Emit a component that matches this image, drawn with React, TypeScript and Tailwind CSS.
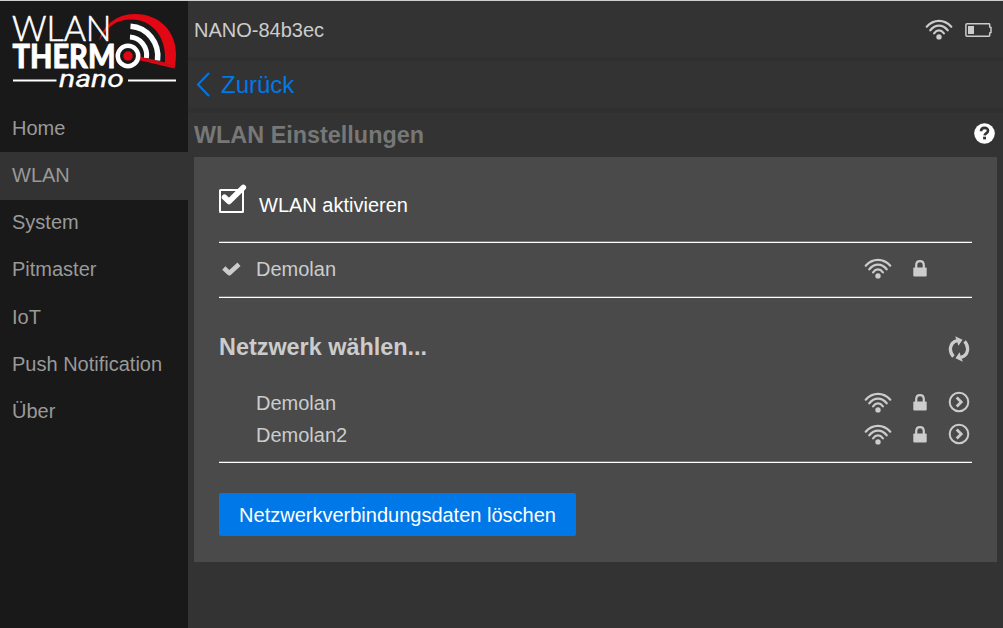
import React from "react";

const navItems = ["Home", "WLAN", "System", "Pitmaster", "IoT", "Push Notification", "Über"];

function Logo() {
  return (
    <svg width="188" height="103.2" viewBox="0 1 188 103.2" className="block" fill="none">
      <path d="M99 41C103 26 116 14 135 14C160 14 176 32 176 54C176 59 175.500 64 174.500 68.500L139 60L140 56.500L165 62.500C167 38 153 19.500 131 19.500C116 19.500 107 27 99 41Z" fill="#e30613" />
      <path d="M141 58.500L174 66" stroke="#b0101b" strokeWidth="0.8" />
      <text x="12" y="41" fill="#fff" stroke="#fff" strokeWidth="0.6" fontSize="34.500" fontWeight="300" textLength="99.500" lengthAdjust="spacingAndGlyphs" fontFamily="Lato, sans-serif">
        WLAN
      </text>
      <path d="M130 37A17.500 18.500 0 0 1 146.500 58" stroke="#fff" strokeWidth="5" />
      <path d="M130.500 26.300A29 30 0 0 1 157.500 60.500" stroke="#fff" strokeWidth="5.500" />
      <text x="12.500" y="67.700" fill="#fff" stroke="#fff" strokeWidth="0.8" fontSize="32.500" fontWeight="900" textLength="103" lengthAdjust="spacingAndGlyphs" fontFamily="Lato, sans-serif">
        THERM
      </text>
      <circle cx="128" cy="56" r="10.200" fill="#191919" stroke="#fff" strokeWidth="4.500" />
      <circle cx="128" cy="56" r="4.700" fill="#e30613" />
      <path d="M13 80.500H56.500M128 80.500H176" stroke="#fff" strokeWidth="2.200" />
      <text x="59" y="86.800" fill="#fff" stroke="#fff" strokeWidth="0.3" fontSize="24" fontStyle="italic" fontWeight="400" textLength="65" lengthAdjust="spacingAndGlyphs" fontFamily="Roboto, sans-serif">
        nano
      </text>
    </svg>
  );
}

function Wifi() {
  return (
    <svg width="28" height="21" viewBox="0 0 28 21" fill="none" stroke="currentColor" strokeWidth="2.2" strokeLinecap="round">
      <path d="M1.700 7.700C8.600-.2 19.400-.2 26.300 7.700" />
      <path d="M5.300 11.300C10.300 5.100 17.700 5.100 22.700 11.300" />
      <path d="M9.100 14.300C12 10.500 16 10.500 18.900 14.300" />
      <circle cx="14" cy="17.900" r="2.700" fill="currentColor" stroke="none" />
    </svg>
  );
}

function Lock() {
  return (
    <svg width="14" height="17" viewBox="0 0 14 17" fill="none">
      <path d="M3.200 8V5.200C3.200-.2 10.800-.2 10.800 5.200V8" stroke="currentColor" strokeWidth="2.200" />
      <rect x="0.300" y="7.600" width="13.400" height="9" rx="1" fill="currentColor" />
    </svg>
  );
}

function Go() {
  return (
    <svg width="22" height="22" viewBox="0 0 22 22" fill="none" stroke="currentColor">
      <circle cx="11" cy="11" r="9.300" strokeWidth="2" />
      <path d="M8.700 6.500L13.200 11L8.700 15.500" strokeWidth="2.800" />
    </svg>
  );
}

function Refresh() {
  return (
    <svg width="22" height="26" viewBox="0 0 22 26" fill="none">
      <path d="M5.400 20.600C.8 15.500 1.200 6.800 9 4.600M16.600 5.400C21.200 10.500 20.800 19.200 13 21.400" stroke="currentColor" strokeWidth="3.300" />
      <path d="M7.200.2L14.500 3.800L10.500 9.800Z M14.800 25.800L7.500 22.200L11.500 16.200Z" fill="currentColor" />
    </svg>
  );
}

function Rule() {
  return <div className="h-[2px] border-t border-[#777] bg-white" />;
}

function Network({ name, connected = false }: { name: string; connected?: boolean }) {
  return (
    <div className="flex h-8 items-center">
      <div className="flex w-[37px] pl-[3px]">
        {connected && (
          <svg width="19" height="15" viewBox="0 0 19 15" fill="none" stroke="currentColor" strokeWidth="4.6">
            <path d="M1.800 6L7.200 11.200L17 2.300" strokeLinejoin="round" />
          </svg>
        )}
      </div>
      <span className="flex-1">{name}</span>
      <div className="flex w-[108px] items-center pb-[2px]">
        <Wifi />
        <div className="ml-[21px]"><Lock /></div>
        {!connected && <div className="ml-[21px]"><Go /></div>}
      </div>
    </div>
  );
}

export default function App() {
  return (
    <div className="flex h-[628px] w-[1003px] overflow-hidden border-t border-[#ccd0ce] bg-[#333] font-['Liberation_Sans',Arial,sans-serif] text-[20px] leading-6 text-[#ccc]">
      <aside className="w-[188px] shrink-0 bg-[#191919]">
        <Logo />
        <nav className="flex flex-col text-[#999]">
          {navItems.map((item) => (
            <a key={item} className={item === "WLAN" ? "-mb-[1.2px] mt-[0.8px] flex h-[47.6px] items-center bg-[#333] pb-[1.6px] pl-3" : "flex h-[47.2px] items-center pl-3"}>
              {item}
            </a>
          ))}
        </nav>
      </aside>
      <main className="flex-1">
        <header className="flex h-[60px] items-center justify-between border-b-4 border-[#303030] pl-[6px] pr-[11px]">
          <span className="pt-[2px]">NANO-84b3ec</span>
          <div className="flex items-center gap-[12px]">
            <Wifi />
            <svg className="mt-[2px]" width="27" height="16" viewBox="0 0 27 16" fill="none">
              <path d="M2 1.800H24Q24.700 1.800 24.700 2.500V5L26 5.500V10.500L24.700 11V13.500Q24.700 14.200 24 14.200H2Q.9 14.200.9 13V3Q.9 1.800 2 1.800Z" stroke="currentColor" strokeWidth="1.500" />
              <rect x="3" y="4" width="6" height="8" fill="currentColor" />
            </svg>
          </div>
        </header>
        <div className="flex h-[52px] items-center gap-[11px] border-b-[5px] border-[#303030] pl-[8px] text-[24px] text-[#0078e7]">
          <svg width="14" height="25" viewBox="0 0 14 25" fill="none" stroke="currentColor" strokeWidth="2">
            <path d="M13 1L2 12.500L13 24" />
          </svg>
          <a>Zurück</a>
        </div>
        <div className="flex h-[44px] items-center justify-between pb-[2px] pl-[6px] pr-[8px]">
          <h1 className="pt-[2px] text-[23.4px] font-bold text-[#777]">WLAN Einstellungen</h1>
          <svg className="-mt-[2px]" width="21" height="21" viewBox="0 0 21 21">
            <circle cx="10.500" cy="10.500" r="10.300" fill="#fff" />
            <path d="M7 8.300C7.100 3.800 14 3.800 14 7.700C14 10.200 10.800 10.300 10.600 12.300" fill="none" stroke="#333" strokeWidth="2.600" />
            <rect x="9.100" y="13.700" width="2.900" height="2.700" fill="#333" />
          </svg>
        </div>
        <section className="ml-[6px] mr-[6px] h-[405px] bg-[#4a4a4a] px-[25px] pt-[27px]">
          <div className="flex h-[57px] items-start text-white">
            <svg width="28" height="30" viewBox="0 0 28 30" fill="none" stroke="currentColor">
              <rect x="1" y="6" width="23" height="22" rx="0.500" strokeWidth="2" />
              <path d="M5.500 13.200L10 17.500L24.300 3.400" strokeWidth="5.600" strokeLinejoin="round" strokeLinecap="round" />
            </svg>
            <span className="ml-[12px] mt-[9px]">WLAN aktivieren</span>
          </div>
          <Rule />
          <div className="pb-[11px] pt-[10px]"><Network name="Demolan" connected /></div>
          <Rule />
          <div className="flex h-[89px] items-center justify-between pt-[12px]">
            <h2 className="pb-[3px] text-[23.4px] font-bold">Netzwerk wählen...</h2>
            <div className="mr-[2px]"><Refresh /></div>
          </div>
          <Network name="Demolan" />
          <Network name="Demolan2" />
          <div className="mt-[10px]"><Rule /></div>
          <button className="mt-[30px] h-[43px] w-[357px] rounded-[2px] bg-[#0078e7] text-white">Netzwerkverbindungsdaten löschen</button>
        </section>
      </main>
    </div>
  );
}
